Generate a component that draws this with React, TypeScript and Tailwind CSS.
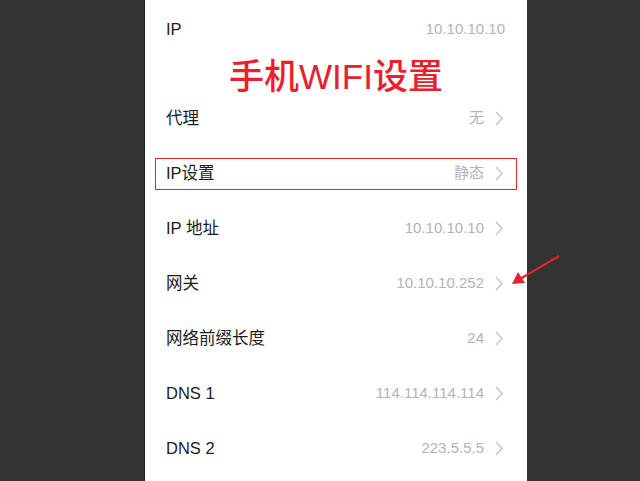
import React from "react";

interface Row {
  label: string;
  value: string;
  chevron: boolean;
  boxed?: boolean;
}

const font = {
  fontFamily: '"Liberation Sans", "Noto Sans CJK SC", sans-serif',
};

const Chevron: React.FC = () => (
  <svg width="8" height="15" viewBox="0 0 8 15" className="ml-[11px] shrink-0">
    <path d="M1 1 L7 7.5 L1 14" fill="none" stroke="#c4c4c4" strokeWidth="1.4" />
  </svg>
);

const rowsAfter: Row[] = [
  { label: "代理", value: "无", chevron: true },
  { label: "IP设置", value: "静态", chevron: true, boxed: true },
  { label: "IP 地址", value: "10.10.10.10", chevron: true },
  { label: "网关", value: "10.10.10.252", chevron: true },
  { label: "网络前缀长度", value: "24", chevron: true },
  { label: "DNS 1", value: "114.114.114.114", chevron: true },
  { label: "DNS 2", value: "223.5.5.5", chevron: true },
];

const RowContent: React.FC<{ row: Row }> = ({ row }) => (
  <>
    <span className="flex-1 text-[16.5px] text-[#1c1c1c]">{row.label}</span>
    <span className="text-[15px] text-[#b3b3b3]">{row.value}</span>
    {row.chevron && <Chevron />}
  </>
);

const App: React.FC = () => {
  return (
    <div className="relative h-[481px] w-[640px] overflow-hidden bg-[#333333]" style={font}>
      <div className="ml-[144px] flex h-full w-[383px] flex-col border-l border-[#222] bg-white pt-[2px]">
        {/* IP row, no chevron */}
        <div className="flex h-[55px] items-center pl-[21px] pr-[22px]">
          <RowContent row={{ label: "IP", value: "10.10.10.10", chevron: false }} />
        </div>
        <div className="h-[34px]" />
        {rowsAfter.map((row) =>
          row.boxed ? (
            <div key={row.label} className="flex h-[55px] items-center px-[10px]">
              <div className="flex h-[32px] flex-1 items-center border-[1.5px] border-[#e0252d] pl-[10px] pr-[13px]">
                <RowContent row={row} />
              </div>
            </div>
          ) : (
            <div key={row.label} className="flex h-[55px] items-center pl-[21px] pr-[24px]">
              <RowContent row={row} />
            </div>
          )
        )}
      </div>

      {/* overlay title */}
      <div
        className="absolute left-[145px] top-[56px] w-[382px] text-center text-[35px] font-medium leading-[42px] text-[#e8202b]"
        style={{ textShadow: "0 0 2px #fff, 0 0 2px #fff" }}
      >
        手机WIFI设置
      </div>

      {/* red arrow */}
      <svg className="absolute left-0 top-0" width="640" height="481">
        <line x1="559" y1="256" x2="520" y2="279" stroke="#e0252d" strokeWidth="2.2" />
        <polygon points="512,284 518,272 525,283" fill="#e0252d" />
      </svg>
    </div>
  );
};

export default App;
